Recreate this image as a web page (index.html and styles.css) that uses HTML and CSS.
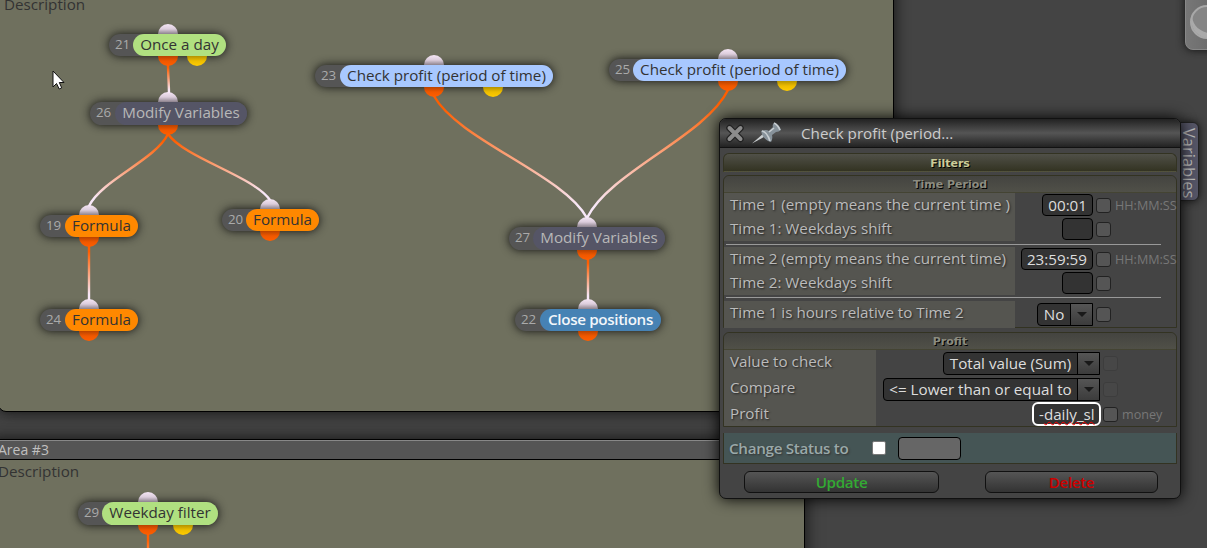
FILE: index.html
```
<!DOCTYPE html>
<html lang="en">
<head>
    <meta charset="UTF-8">
    <title>Strategy editor</title>
    <link rel="stylesheet" href="styles.css">
</head>
<body>
    <div class="workspace">
        <div class="area area-main">
            <div class="area-description">Description</div>
        </div>
        <div class="area area-third">
            <div class="area-title">Area #3</div>
            <div class="area-description">Description</div>
        </div>

        <div id="nodes"></div>
        <svg class="links" id="links" width="1207" height="548"></svg>

        <svg class="cursor" width="14" height="21" viewBox="0 0 14 21">
            <path d="M1 1v16l3.500-3.500 2.700 5.500 2.500-1.200-2.400-5.300h4.700z" fill="#fff" stroke="#111"/>
        </svg>

        <div class="corner-button">
            <svg width="22" height="48" viewBox="0 0 22 48">
                <circle cx="21" cy="23" r="16" fill="#858585" stroke="#a8a8a8" stroke-width="2"/>
                <path d="M6 15c0 10 5 16 16 19v5c-12-1-19-11-16-24z" fill="#aaa"/>
            </svg>
        </div>
        <div class="side-tab">Variables</div>

        <div class="dialog">
            <div class="dialog-title">
                <svg width="20" height="20" viewBox="0 0 20 20">
                    <path d="M4.500 5l11 11M15.500 5l-11 11" stroke="#222" stroke-width="6.500" stroke-linecap="round"/>
                    <path d="M4.500 5l11 11M15.500 5l-11 11" stroke="#8c8c8c" stroke-width="4" stroke-linecap="round"/>
                </svg>
                <svg class="pin" width="30" height="24" viewBox="0 0 30 24">
                    <path d="M1 22.500L13 12l2.500 2.500z" fill="#ccd0d2"/>
                    <path d="M10 10q5-2 8 0l4-4q-1-2 1-4 5 1 7 7-2 2-5 2l-4 3q1 4-1 7-8-2-10-11z" fill="#87929a"/>
                    <path d="M11 10q5 1 8 10M23 2q4 2 6 7M18 11l5-4" fill="none" stroke="#c8ced2" stroke-width="1.600"/>
                </svg>
                <span>Check profit (period...</span>
            </div>

            <div class="section-title">Filters</div>

            <div class="fieldset time-period">
                <div class="fieldset-title">Time Period</div>
                <div class="row">
                    <label>Time 1 (empty means the current time )</label>
                    <div class="control"><span class="input">00:01</span></div>
                    <span class="check"></span><span class="hint">HH:MM:SS</span>
                </div>
                <div class="row">
                    <label>Time 1: Weekdays shift</label>
                    <div class="control"><span class="input empty"></span></div>
                    <span class="check"></span>
                </div>
                <div class="divider"></div>
                <div class="row">
                    <label>Time 2 (empty means the current time)</label>
                    <div class="control"><span class="input">23:59:59</span></div>
                    <span class="check"></span><span class="hint">HH:MM:SS</span>
                </div>
                <div class="row">
                    <label>Time 2: Weekdays shift</label>
                    <div class="control"><span class="input empty"></span></div>
                    <span class="check"></span>
                </div>
                <div class="divider second"></div>
                <div class="row last">
                    <label>Time 1 is hours relative to Time 2</label>
                    <div class="control"><span class="select short"><span>No</span><i></i></span></div>
                    <span class="check"></span>
                </div>
            </div>

            <div class="fieldset profit">
                <div class="fieldset-title">Profit</div>
                <div class="row">
                    <label>Value to check</label>
                    <div class="control"><span class="select total"><span>Total value (Sum)</span><i></i></span></div>
                    <span class="check faded"></span>
                </div>
                <div class="row">
                    <label>Compare</label>
                    <div class="control"><span class="select compare"><span>&lt;= Lower than or equal to</span><i></i></span></div>
                    <span class="check faded"></span>
                </div>
                <div class="row">
                    <label>Profit</label>
                    <div class="control"><span class="input focused">-<b></b><u>daily_sl</u></span></div>
                    <span class="check"></span><span class="hint">money</span>
                </div>
            </div>

            <div class="status">
                <label>Change Status to</label>
                <span class="status-check"></span>
                <span class="status-value"></span>
            </div>

            <div class="buttons">
                <div class="button update">Update</div>
                <div class="button delete">Delete</div>
            </div>
        </div>
    </div>

    <script src="script.js"></script>
</body>
</html>
```
FILE: styles.css
```
* {
    box-sizing: border-box;
}

body {
    margin: 0;
    background: #444;
    font-family: "Open Sans", "Noto Sans", sans-serif;
    font-size: 15.200px;
    color: #c0c0c0;
}

.workspace {
    position: relative;
    width: 1207px;
    height: 548px;
    overflow: hidden;
}

/* Areas on the canvas */
.area {
    position: absolute;
    background: #6f705e;
    border: 1px solid #000;
    box-shadow: 0 0 15px #111;
}

.area-main {
    left: -2px;
    top: -30px;
    width: 896px;
    height: 442px;
    padding: 22px 0 0 5px;
    border-radius: 8px;
}

.area-third {
    left: -10px;
    top: 439px;
    width: 815px;
    height: 130px;
}

.area-title {
    height: 20px;
    padding-left: 7px;
    background: #555;
    border-top: 1px solid #888;
    border-bottom: 1px solid #000;
    line-height: 17px;
    font-size: 14px;
}

.area-description {
    line-height: 22px;
    color: #333;
}

.area-third .area-description {
    padding-left: 7px;
}

/* Nodes */
.node {
    position: absolute;
    display: flex;
    border-radius: 12px;
    background: #555;
    box-shadow: 0 0 10px #111;
}

.node-id {
    flex: none;
    padding-left: 6px;
    font-size: 13.300px;
    line-height: 20px;
    color: #aaa;
}

.node-label {
    flex: 1;
    border-radius: 12px;
    text-align: center;
    line-height: 20px;
    color: #333;
    white-space: nowrap;
}

.green { background: #b0e080; }
.blue { background: #a8c8ff; }
.orange { background: #ff8800; }
.purple { background: #555566; color: #b8b8b8; line-height: 21px; }
.steel { background: #4682b4; color: #f2f6fa; font-weight: 600; letter-spacing: -.35px; }

.port {
    position: absolute;
    width: 20px;
    height: 10px;
}

.port.in {
    border-radius: 10px 10px 0 0;
    background: linear-gradient(#f5e6f5, #dccddc 50%, #8c828c);
}

.port.out {
    border-radius: 0 0 10px 10px;
    background: linear-gradient(#b94300, #f05800 50%, #ff5e00);
}

.port.alt {
    border-radius: 0 0 10px 10px;
    background: linear-gradient(#b39200, #eebd00 50%, #ffcc00);
}

.links {
    position: absolute;
    left: 0;
    top: 0;
    fill: none;
    stroke-width: 2.400;
}

.cursor {
    position: absolute;
    left: 52px;
    top: 70px;
}

/* Right edge */
.corner-button {
    position: absolute;
    left: 1185px;
    top: -10px;
    width: 40px;
    height: 60px;
    padding-top: 8px;
    border: 1px solid #888;
    border-radius: 8px;
    background: linear-gradient(90deg, #777, #666);
    box-shadow: 0 0 8px #111;
}

.side-tab {
    position: absolute;
    left: 1180px;
    top: 122px;
    width: 19px;
    height: 79px;
    border: 1px solid #222;
    border-radius: 0 6px 6px 0;
    background: #555566;
    box-shadow: 0 0 8px #111;
    writing-mode: vertical-rl;
    padding-top: 5px;
    line-height: 17px;
    font-size: 16.500px;
    color: #bbb;
}

/* Settings dialog */
.dialog {
    position: absolute;
    left: 719px;
    top: 118px;
    width: 462px;
    height: 381px;
    padding: 0 3px;
    border: 1px solid #111;
    border-radius: 7px;
    background: #444;
    box-shadow: 0 0 15px #000;
}

.dialog-title {
    display: flex;
    align-items: center;
    height: 29px;
    margin: 0 -3px 5px;
    padding-left: 5px;
    border-bottom: 1px solid #111;
    border-radius: 6px 6px 0 0;
    background: linear-gradient(#222, #555 50%, #222);
    color: #ccc;
}

.dialog-title .pin {
    margin: 0 20px 0 6px;
}

.section-title,
.fieldset-title {
    font: bold 11px/17px "DejaVu Sans", sans-serif;
    text-align: center;
    text-shadow: 1px 1px 0 #000;
}

.section-title {
    height: 19px;
    margin-bottom: 3px;
    border: 1px solid #332;
    border-bottom: 1px dotted #553;
    border-radius: 6px 6px 0 0;
    background: linear-gradient(#505048, #332);
    line-height: 19px;
    color: #cc9;
}

.fieldset {
    border: 1px solid #333322;
    border-radius: 6px 6px 0 0;
}

.fieldset-title {
    height: 17px;
    border-bottom: 1px solid #443;
    border-radius: 6px 6px 0 0;
    background: linear-gradient(#444440, #505048);
    line-height: 18px;
    color: #8c8c80;
}

.time-period {
    height: 153px;
    margin-bottom: 4px;
}

.row {
    display: flex;
    align-items: center;
    height: 24px;
}

.row.last {
    height: 27px;
}

.row label {
    flex: none;
    width: 291px;
    height: 100%;
    padding-left: 6px;
    background: #555550;
    line-height: 22px;
    color: #bbb;
    text-shadow: 1px 1px 2px #222;
    white-space: nowrap;
}

.control {
    flex: none;
    display: flex;
    justify-content: flex-end;
    width: 78px;
    margin-right: 3px;
}

.divider {
    height: 6px;
    padding: 3px 15px 0 2px;
}

.divider.second {
    padding-top: 2px;
}

.divider::before {
    content: "";
    display: block;
    height: 1px;
    background: #999;
}

.input {
    height: 22px;
    padding: 0 5px;
    border: 1px solid #000;
    border-radius: 4px;
    background: #333;
    line-height: 20px;
    color: #ddd;
    white-space: nowrap;
}

.input.empty {
    width: 31px;
}

.input.focused {
    display: flex;
    width: 69px;
    height: 24px;
    margin-right: -1px;
    border: 2px solid #fff;
    border-radius: 6px;
    line-height: 20px;
}

.input.focused b {
    width: 1px;
    height: 18px;
    background: #fff;
}

.input.focused u {
    text-decoration: underline wavy #f00 1px;
    text-decoration-skip-ink: none;
    text-underline-offset: 1px;
}

.select {
    display: flex;
    height: 23px;
    border: 1px solid #000;
    border-radius: 4px 0 0 4px;
    background: #333;
    line-height: 20px;
    color: #ddd;
    white-space: nowrap;
}

.select span {
    flex: 1;
    text-align: center;
}

.select.short { width: 56px; }
.select.total { width: 157px; }
.select.compare { width: 217px; }

.select i {
    display: flex;
    align-items: center;
    justify-content: center;
    width: 22px;
    border-left: 1px solid #000;
    background: linear-gradient(#555, #3c3c3c);
}

.select i::before {
    content: "";
    border: 5px solid transparent;
    border-top-color: #191919;
    border-bottom: 0;
}

.check {
    flex: none;
    width: 15px;
    height: 15px;
    border: 1px solid #222;
    border-radius: 3px;
    background: #555;
}

.check.faded {
    opacity: .18;
}

.hint {
    margin-left: 4px;
    font-size: 12.600px;
    color: #777;
}

.profit {
    height: 95px;
    margin-bottom: 6px;
}

.profit .row {
    height: 26px;
}

.profit .row:last-child {
    height: 24px;
}

.profit .row label {
    width: 152px;
}

.profit .control {
    width: 224px;
}

.status {
    display: flex;
    align-items: center;
    height: 31px;
    padding-left: 5px;
    border: solid #332;
    border-width: 0 1px 1px;
    background: #455555;
}

.status label {
    width: 143px;
    padding-bottom: 1px;
    color: #9aa9a9;
    font-weight: 600;
    letter-spacing: -.3px;
    text-shadow: 1px 1px 2px #333;
}

.status-check {
    width: 14px;
    height: 14px;
    margin-right: 12px;
    border: 1px solid #777;
    border-radius: 2px;
    background: #fff;
}

.status-value {
    width: 63px;
    height: 23px;
    border: 1px solid #000;
    border-radius: 4px;
    background: #666;
}

.buttons {
    display: flex;
    gap: 46px;
    padding: 7px 0 0 21px;
}

.button {
    width: 195px;
    height: 22px;
    border: 1px solid #111;
    border-radius: 6px;
    background: linear-gradient(#555, #333);
    text-align: center;
    line-height: 20px;
    font-weight: 600;
    letter-spacing: -.35px;
}

.update { color: #3a3; }
.delete { width: 173px; color: #c00; }
```
FILE: script.js
```
// label is the width of the id part, port and alt are x centers
const nodes = [
    { id: 21, text: 'Once a day', color: 'green', x: 109, y: 34, w: 117, h: 22, label: 24, port: 168, alt: 197 },
    { id: 26, text: 'Modify Variables', color: 'purple', x: 90, y: 102, w: 157, h: 23, label: 25, port: 168 },
    { id: 19, text: 'Formula', color: 'orange', x: 40, y: 215, w: 98, h: 22, label: 25, port: 89 },
    { id: 24, text: 'Formula', color: 'orange', x: 40, y: 309, w: 98, h: 22, label: 25, port: 89 },
    { id: 20, text: 'Formula', color: 'orange', x: 222, y: 209, w: 97, h: 22, label: 24, port: 270 },
    { id: 23, text: 'Check profit (period of time)', color: 'blue', x: 315, y: 65, w: 238, h: 22, label: 25, port: 434, alt: 493 },
    { id: 25, text: 'Check profit (period of time)', color: 'blue', x: 609, y: 59, w: 237, h: 22, label: 24, port: 728, alt: 787 },
    { id: 27, text: 'Modify Variables', color: 'purple', x: 509, y: 227, w: 156, h: 23, label: 24, port: 587 },
    { id: 22, text: 'Close positions', color: 'steel', x: 515, y: 309, w: 146, h: 22, label: 25, port: 588 },
    { id: 29, text: 'Weekday filter', color: 'green', x: 78, y: 502, w: 140, h: 23, label: 24, port: 148, alt: 183 }
];

// start x, y, end x, y
const links = [
    [168, 65, 169, 93],
    [168, 134, 89, 206],
    [168, 134, 270, 200],
    [89, 246, 89, 300],
    [434, 96, 587, 218],
    [728, 90, 587, 218],
    [588, 259, 588, 300],
    [148, 534, 148, 590]
];

function port(type, x, y) {
    return `<div class="port ${type}" style="left:${x - 10}px;top:${y}px"></div>`;
}

document.getElementById('nodes').innerHTML = nodes.map(n => `
    <div class="node" style="left:${n.x}px;top:${n.y}px;width:${n.w}px;height:${n.h}px">
        <span class="node-id" style="width:${n.label}px">${n.id}</span>
        <span class="node-label ${n.color}">${n.text}</span>
    </div>
    ${port('in', n.port, n.y - 10)}
    ${port('out', n.port, n.y + n.h)}
    ${n.alt ? port('alt', n.alt, n.y + n.h) : ''}
`).join('');

document.getElementById('links').innerHTML = links.map(([x1, y1, x2, y2], i) => {
    const bendX = (x2 - x1) * 0.16;
    const bendY = (y2 - y1) * 0.36;
    return `
        <linearGradient id="g${i}" gradientUnits="userSpaceOnUse" x1="${x1}" y1="${y1}" x2="${x1}" y2="${y2}">
            <stop offset="0.1" stop-color="#ff5e00"/>
            <stop offset="0.9" stop-color="#f8e8f8"/>
        </linearGradient>
        <path d="M${x1} ${y1}C${x1 + bendX} ${y1 + bendY} ${x2 - bendX} ${y2 - bendY} ${x2} ${y2}" stroke="url(#g${i})"/>`;
}).join('');
```
